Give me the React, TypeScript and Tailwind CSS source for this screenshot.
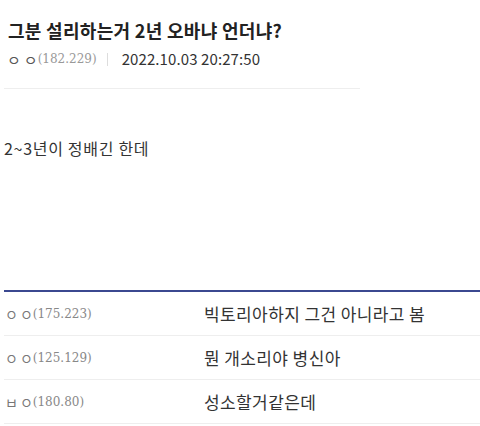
export default function App() {
  const kr = { fontFamily: '"Noto Sans CJK KR", "Noto Sans", sans-serif' };
  const ip = { fontFamily: 'Tahoma, "DejaVu Serif", "Liberation Serif", serif' };
  const rows = [
    { n: ["ㅇ", "ㅇ"], ip: "(175.223)", c: "빅토리아하지 그건 아니라고 봄" },
    { n: ["ㅇ", "ㅇ"], ip: "(125.129)", c: "뭔 개소리야 병신아" },
    { n: ["ㅂ", "ㅇ"], ip: "(180.80)", c: "성소할거같은데" },
  ];
  return (
    <div className="w-[480px] h-[426px] bg-white overflow-hidden text-[#333]" style={kr}>
      <div className="w-[356px] ml-[4px] border-b border-[#eeeeee] pb-[16px]">
        <div className="pl-[4px] pt-[15px] text-[18px] tracking-[0.3px] font-bold leading-[30px] text-[#222]">그분 설리하는거 2년 오바냐 언더냐?</div>
        <div className="pl-[3px] mt-[1px] flex items-center h-[26px]">
          <span className="flex gap-[3px] text-[15px] leading-none text-[#555]">
            <span>ㅇ</span>
            <span>ㅇ</span>
          </span>
          <span className="text-[12px] text-[#999]" style={ip}>(182.229)</span>
          <span className="ml-[10px] mr-[14px] w-px h-[13px] bg-[#dddddd]"></span>
          <span className="text-[15px] tracking-[0.1px] text-[#333]">2022.10.03 20:27:50</span>
        </div>
      </div>
      <div className="pl-[4px] mt-[46px] text-[16px] tracking-[0.7px] leading-[26px] text-[#333]">2~3년이 정배긴 한데</div>
      <div className="ml-[4px] mt-[129px] border-t-2 border-[#3b4890]">
        {rows.map((r, i) => (
          <div key={i} className="flex items-center h-[44px] border-b border-[#eeeeee]">
            <div className="w-[200px] pl-[1px] flex items-center text-[#777]">
              <span className="flex gap-[2px] text-[14px] leading-none">
                <span>{r.n[0]}</span>
                <span>{r.n[1]}</span>
              </span>
              <span className="text-[12px] text-[#888]" style={ip}>{r.ip}</span>
            </div>
            <div className="text-[17px] tracking-[0.4px] text-[#333]">{r.c}</div>
          </div>
        ))}
      </div>
    </div>
  );
}
